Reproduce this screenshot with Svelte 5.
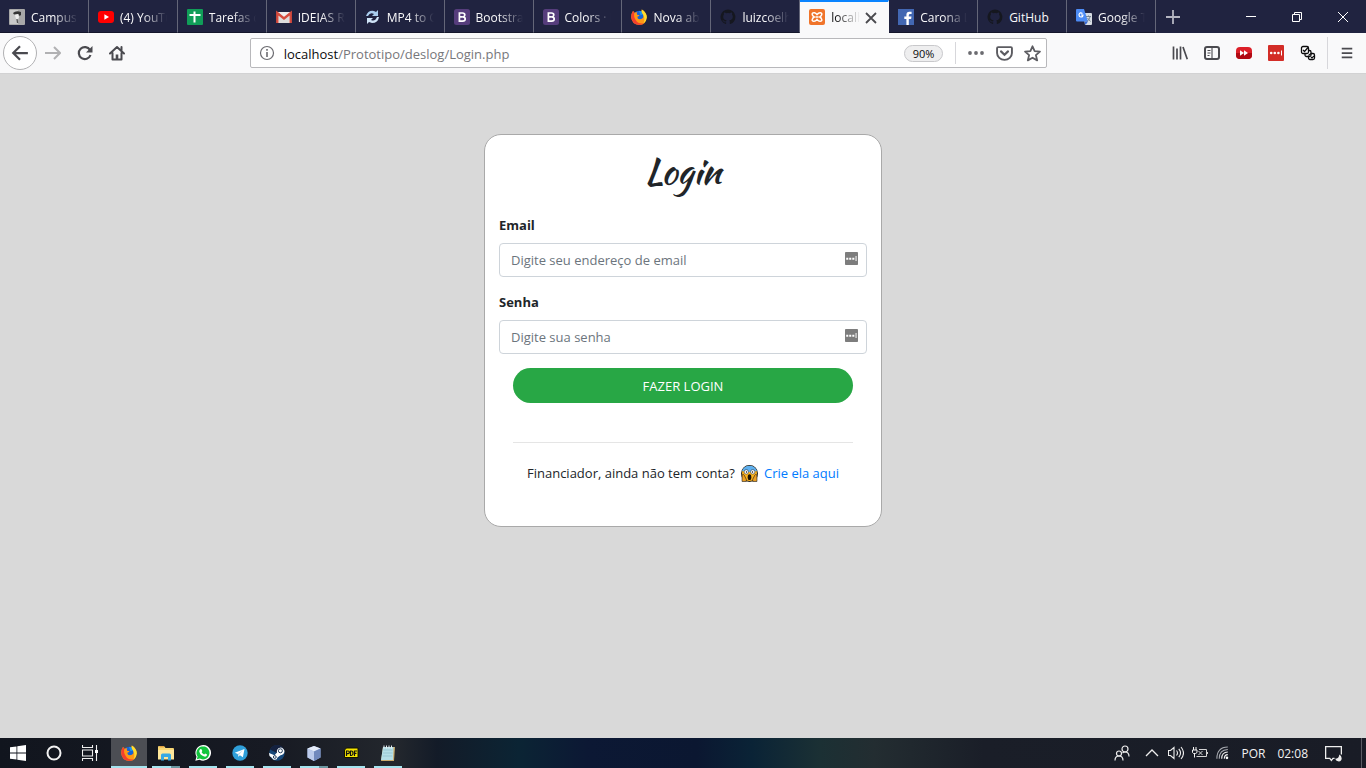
<script>
  const tabs = [
    { icon: 'campus', title: 'Campus' },
    { icon: 'youtube', title: '(4) YouTu' },
    { icon: 'sheets', title: 'Tarefas d' },
    { icon: 'gmail', title: 'IDEIAS RA' },
    { icon: 'convert', title: 'MP4 to G' },
    { icon: 'bootstrap', title: 'Bootstrap' },
    { icon: 'bootstrap', title: 'Colors · B' },
    { icon: 'firefox', title: 'Nova aba' },
    { icon: 'github', title: 'luizcoelh' },
    { icon: 'xampp', title: 'localh', active: true },
    { icon: 'facebook', title: 'Carona L' },
    { icon: 'github', title: 'GitHub', short: true },
    { icon: 'translate', title: 'Google T' }
  ];

  const apps = [
    { icon: 'firefox', label: 'Firefox', active: true },
    { icon: 'explorer', label: 'Explorador', multiple: true },
    { icon: 'whatsapp', label: 'WhatsApp' },
    { icon: 'telegram', label: 'Telegram' },
    { icon: 'steam', label: 'Steam' },
    { icon: 'cube', label: 'VirtualBox', multiple: true },
    { icon: 'pdf', label: 'PDF' },
    { icon: 'notepad', label: 'Bloco de notas' }
  ];

  let email = $state('');
  let password = $state('');
</script>

{#snippet glyph(name, size)}
  <svg width={size} height={size} viewBox="0 0 16 16" fill="none" aria-hidden="true">
    {#if name === 'campus'}
      <rect width="16" height="16" rx="1" fill="#a8a8a8" />
      <path d="M1 1h8v14H1z" fill="#c9c9c9" />
      <path d="M4 4q3-3 8-1v3l-1.500 1-1-2-4.500.5z" fill="#333" />
      <path d="M6 6l3-1 1 3-1 3-2-1z" fill="#eee" />
      <path d="M8 10l.6 4" stroke="#555" stroke-width="1.300" />
    {:else if name === 'youtube'}
      <rect y="2" width="16" height="12" rx="3" fill="#f00" />
      <path d="M6.400 5.300v5.400L11 8z" fill="#fff" />
    {:else if name === 'sheets'}
      <rect width="16" height="16" rx="1" fill="#109d58" />
      <path d="M7.500 2.500v11M2.500 6h11" stroke="#fff" stroke-width="2" />
    {:else if name === 'gmail'}
      <rect x="1" y="3" width="14" height="11" rx="1" fill="#eee" />
      <path d="M3 14V6l5 4.300L13 6v8z" fill="#ddd" />
      <path d="M1.300 14V4L8 9.500 14.700 4v10" stroke="#d54b3d" stroke-width="2.400" />
    {:else if name === 'convert'}
      <path d="M1 7Q3 1 9 2l2 1 2-2v6H7l2-2Q5 3 3 7z" fill="#a9cdee" />
      <path d="M14 8q-1 6-7 6l-3-1-2 2V9h6l-2 2q4 2 6-3z" fill="#cfe4f7" />
    {:else if name === 'bootstrap'}
      <rect width="16" height="16" rx="2.500" fill="#563d7c" />
      <path d="M5.400 4h3q2.400 0 2.400 2 0 1.600-1.700 1.900 2.100.3 2.100 2.100 0 2.200-2.700 2.200H5.400zM5.400 7.900h3.500" stroke="#fff" stroke-width="1.700" />
    {:else if name === 'firefox'}
      <circle cx="8.300" cy="8.300" r="6.600" fill="#1464d8" />
      <path d="M8 2l2.800.2 2 3-3.200 1z" fill="#1d95f0" />
      <path d="M2 2q1 .6 1.400 1.700Q5 3 6.400 3.500 5 4.800 6.500 6.100h2Q8.400 7.300 6.400 7.800q0 2.500 2.500 2.500 2.300 0 3.500-2.100Q13 5.500 11 3.800 10.300 2.600 10.800.5q4.800 3 5 7.700Q15.300 15.500 8.200 16 .9 15.400.2 8.200.1 4.700 2 2z" fill="#ff9815" />
      <path d="M2 2Q.1 4.700.2 8.200.9 15.400 8.200 16q3 0 5-1.700-6 1.200-8.300-3Q2.300 7.700 3.400 3.700z" fill="#f4402e" />
      <path d="M10.800.5q4.800 3 5 7.700-.3 4-3.300 6.200Q15 9.300 11 3.800 10.300 2.600 10.800.5z" fill="#ffdd2e" />
    {:else if name === 'github'}
      <path d="M8 .5a7.500 7.500 0 0 0-2.400 14.600c.4.100.5-.2.500-.4v-1.400c-2.100.5-2.600-.9-2.600-.9-.3-.8-.8-1-.8-1-.7-.5 0-.5 0-.5.800.1 1.200.8 1.200.8.700 1.200 1.800.8 2.200.6.100-.5.300-.8.500-1-1.700-.2-3.400-.8-3.400-3.700 0-.8.300-1.500.8-2-.1-.2-.4-1 .1-2 0 0 .6-.2 2 .7a7 7 0 0 1 3.800 0c1.400-.9 2-.7 2-.7.500 1 .2 1.800.1 2 .5.500.8 1.200.8 2 0 2.900-1.800 3.500-3.500 3.700.3.200.5.700.5 1.400v2c0 .2.100.5.500.4A7.500 7.500 0 0 0 8 .5z" fill="#15171f" />
    {:else if name === 'xampp'}
      <rect width="16" height="16" rx="2" fill="#f0742a" />
      <path d="M5.500 3.700H5q-2.500 0-1.600 2.400.4 1.200 1.800 1.900-1.400.7-1.800 1.900-.9 2.400 1.600 2.400 1.600 0 3-1.800 1.400 1.800 3 1.800 2.500 0 1.600-2.400-.4-1.200-1.800-1.900 1.400-.7 1.800-1.900.9-2.400-1.600-2.400-1.600 0-3 1.800-1.200-1.600-2.500-1.800z" stroke="#fff" stroke-width="1.500" />
      <path d="M6.500 8h3" stroke="#fff" stroke-width="1.500" />
    {:else if name === 'facebook'}
      <rect width="16" height="16" fill="#4267b2" />
      <path d="M8.400 16V10H6.300V7.500h2.100V5.700Q8.400 2.700 11.300 2.700h2.300v2.400h-1.500q-1.300 0-1.300 1.200v1.200h2.700l-.4 2.500h-2.300v6z" fill="#fff" />
    {:else if name === 'translate'}
      <path d="M7 4h8q1 0 1 1v10q0 1-1 1H9z" fill="#d8dde3" />
      <path d="M1 0h7l4 12.500H1q-1 0-1-1V1q0-1 1-1z" fill="#4c8bf5" />
      <path d="M8.500 12.500H12L9.500 16z" fill="#3367d6" />
      <path d="M6.500 4.500Q4 2.800 3 5.500 3 8 5 8q2 0 2-2H5" stroke="#fff" stroke-width="1.100" />
      <path d="M10 7.500h5M12.500 6.500v1M14 8q-1 3-3 4.500M11.500 9l3 3.500" stroke="#6b7c8c" stroke-width=".9" />
    {:else if name === 'back'}
      <path d="M15 8H2M8 2L2 8l6 6" stroke="#4a4a4f" stroke-width="2" />
    {:else if name === 'forward'}
      <path d="M0 8h14M9 2l6 6-6 6" stroke="#b1b1b3" stroke-width="2" />
    {:else if name === 'reload'}
      <path d="M13 5A6 6 0 1 0 13.500 10" stroke="#4a4a4f" stroke-width="2.200" />
      <path d="M15.500 1v6.500H9z" fill="#4a4a4f" />
    {:else if name === 'home'}
      <path d="M1 8.500L8 2l7 6.500M3.500 8v6.500h9V8M12.500 2v4" stroke="#4a4a4f" stroke-width="2" stroke-linejoin="round" stroke-linecap="round" />
      <path d="M6.700 9.500h2.600V14H6.700z" fill="#4a4a4f" />
    {:else if name === 'info'}
      <circle cx="8" cy="8" r="6.500" stroke="#6b6b70" stroke-width="1.200" />
      <path d="M8 7v5M8 4v1.700" stroke="#6b6b70" stroke-width="1.600" />
    {:else if name === 'dots'}
      <circle cx="2" cy="8" r="1.900" fill="#6b6b70" />
      <circle cx="8" cy="8" r="1.900" fill="#6b6b70" />
      <circle cx="14" cy="8" r="1.900" fill="#6b6b70" />
    {:else if name === 'pocket'}
      <path d="M2 2h12q1 0 1 1v4.500A7 6.500 0 0 1 1 7.500V3q0-1 1-1z" stroke="#5c5c61" stroke-width="1.800" />
      <path d="M4.700 6L8 9.200 11.300 6" stroke="#5c5c61" stroke-width="2" stroke-linecap="round" />
    {:else if name === 'star'}
      <path d="M8 1.200l2 4.500 5 .5-3.800 3.300 1.200 5L8 12l-4.400 2.500 1.200-5L1 6.200l5-.5z" stroke="#5c5c61" stroke-width="1.700" stroke-linejoin="round" />
    {:else if name === 'library'}
      <path d="M1.500 1.500v13M5 3.500v11M8.500 1.500v13M11 2l4.300 12.300" stroke="#4a4a4f" stroke-width="1.700" />
    {:else if name === 'sidebar'}
      <rect x="1" y="2" width="14" height="12" rx="2" stroke="#4a4a4f" stroke-width="2" />
      <path d="M8 2v12M3.500 5.500h3M3.500 8h3M3.500 10.500h2" stroke="#4a4a4f" stroke-width="1.100" />
    {:else if name === 'player'}
      <rect y="2" width="16" height="12" rx="4" fill="#dc1f28" />
      <path d="M0 8h16v2q0 4-4 4H4q-4 0-4-4z" fill="#b00a13" />
      <path d="M4 5.300V10.700L8 8zM8 5.300V10.700L12 8z" fill="#fff" />
    {:else if name === 'lastpass'}
      <rect width="16" height="16" rx="1" fill="#d32d27" />
      <circle cx="3.200" cy="8" r="1.300" fill="#fff" />
      <circle cx="6.800" cy="8" r="1.300" fill="#fff" />
      <circle cx="10.400" cy="8" r="1.300" fill="#fff" />
      <path d="M13 5.500h1v5h-1z" fill="#fff" />
    {:else if name === 'checks'}
      <rect x="8.500" y="8.500" width="6" height="6" rx="1.500" fill="#fff" stroke="#0c0c0d" stroke-width="1.300" />
      <rect x="5" y="5.500" width="6" height="6" rx="1.500" fill="#fff" stroke="#0c0c0d" stroke-width="1.300" />
      <rect x="1.500" y="1.500" width="7" height="7" rx="1.500" fill="#fff" stroke="#0c0c0d" stroke-width="1.300" />
      <path d="M3 5l1.500 1.500L8 2.500M8.500 10.500l2.500-2M11 12l1 1 2-2" stroke="#0c0c0d" stroke-width="1.200" />
    {:else if name === 'menu'}
      <path d="M2 3h12M2 8h12M2 13h12" stroke="#4a4a4f" stroke-width="2" />
    {:else if name === 'plus'}
      <path d="M8 1v14M1 8h14" stroke="#b4b5c1" stroke-width="1.800" />
    {:else if name === 'close'}
      <path d="M3 3l10 10M13 3L3 13" stroke="#4a4a4f" stroke-width="1.800" />
    {:else if name === 'minimize'}
      <path d="M3 7.500h10" stroke="#fff" />
    {:else if name === 'restore'}
      <path d="M3.500 5.500h7v7h-7zM5.500 5V3.500h7v7H11" stroke="#fff" />
    {:else if name === 'window-close'}
      <path d="M3 3l10 10M13 3L3 13" stroke="#fff" />
    {:else if name === 'windows'}
      <path d="M0 2.300l6.500-.9v6.200H0zM7.300 1.200L16 0v7.600H7.300zM0 8.400h6.500v6.200L0 13.700zM7.300 8.400H16V16l-8.700-1.200z" fill="#fff" />
    {:else if name === 'cortana'}
      <circle cx="8" cy="8" r="6.500" stroke="#f2f2f2" stroke-width="2" />
    {:else if name === 'taskview'}
      <path d="M.5 0v2.500h10V0M.5 16v-2.500h10V16M.5 5h10v6H.500zM14.500 0v16" stroke="#eee" stroke-width="1.100" />
      <path d="M13 5h3v3h-3z" fill="#fff" />
    {:else if name === 'explorer'}
      <path d="M0 2q0-1 1-1h5l1.500 2H15q1 0 1 1v10H0z" fill="#f8d775" />
      <path d="M0 5h16v9.500H0z" fill="#ffe79b" />
      <path d="M3 15.500V10q0-1.500 1.500-1.500h7Q13 8.500 13 10v5.500h-3V12H6v3.500z" fill="#38a9e4" />
      <path d="M1.500 1.800H6" stroke="#d98b2b" />
    {:else if name === 'whatsapp'}
      <path d="M.3 15.800l1.200-4A7.800 7.800 0 1 1 4.500 14.700z" fill="#fff" />
      <path d="M1.800 14.300l.8-2.700a6.500 6.500 0 1 1 2.200 2z" fill="#12c43d" />
      <path d="M5.500 4l1 .2.800 1.900-.7 1.100q.8 1.500 2.600 2.200l.9-1 2 1q0 2-2 2.300Q5.500 11.200 4.200 6.600 4.300 4.800 5.500 4z" fill="#fff" />
    {:else if name === 'telegram'}
      <circle cx="8" cy="8" r="7.700" fill="#2f9fd9" />
      <path d="M2.800 7.800L12.500 4l-1.600 8.200-3-2-1.600 1.600-.5-2.800z" fill="#fff" />
      <path d="M5.800 9l5-3.700-3.400 4-.9 2z" fill="#b8daed" />
    {:else if name === 'steam'}
      <circle cx="8" cy="8" r="7.700" fill="#174879" />
      <path d="M1 4.500A7.700 7.700 0 0 1 15 4.500L8 8z" fill="#14213f" />
      <path d="M0 8l5.500 2.200L8 7.500a3.800 3.800 0 1 1 3.500 2.700l-3 2.200a2.800 2.800 0 0 1-5.400.5L.500 11z" fill="#fff" />
      <circle cx="11.400" cy="5.800" r="2" fill="#fff" stroke="#24405f" />
      <circle cx="5.800" cy="12" r="1.400" stroke="#24405f" />
    {:else if name === 'cube'}
      <path d="M8 1l6.500 2.500v9L8 16l-6.500-3.500v-9z" fill="#9db4de" />
      <path d="M8 1l6.500 2.500L8 6.500 1.500 3.500z" fill="#e6edfa" />
      <path d="M1.500 3.500l6.500 3V16l-6.500-3.500z" fill="#bccbec" />
      <path d="M8 6.500l6.500-3v9L8 16z" fill="#7189bd" />
    {:else if name === 'pdf'}
      <path d="M3.500 3H15v9.500H1.500V5z" fill="#f7e600" stroke="#141400" />
      <path d="M3.500 11V6h1.800q1 0 1 1.300T5.300 8.600H4M7.500 10.500V6h1q1.500 0 1.500 2.200t-1.500 2.300zM11.500 11V6H14M11.500 8.300h2" stroke="#111" stroke-width="1.200" />
    {:else if name === 'notepad'}
      <path d="M3 2h12l-1 14H1z" fill="#c9ab6c" />
      <path d="M3 2h10.500L13 15H1z" fill="#b5dfe7" />
      <path d="M3.500 5h9M3 8h9.500M2.700 11h9.500" stroke="#8dbdca" stroke-width=".7" />
      <path d="M4 .5v3M6.500.5v3M9 .5v3M11.500.5v3" stroke="#e8eef0" />
    {:else if name === 'people'}
      <circle cx="11" cy="4" r="3" stroke="#eee" stroke-width="1.200" />
      <circle cx="5" cy="8.500" r="2.500" stroke="#eee" stroke-width="1.200" />
      <path d="M1 15.500q0-4.500 4-4.500t4 4.500M8.500 8q1-1 2.500-1 4 0 4 4.500" stroke="#eee" stroke-width="1.200" />
    {:else if name === 'chevron'}
      <path d="M2 11l6-6 6 6" stroke="#eee" stroke-width="1.300" />
    {:else if name === 'speaker'}
      <path d="M.5 5.500h2L6 2.500v11l-3.500-3H.500zM8.500 5.500q2 2.500 0 5M10.800 3.800q3.500 4.200 0 8.400M13 2q5 6 0 12" stroke="#eee" stroke-width="1.100" />
    {:else if name === 'battery'}
      <path d="M7 4.500h7.500v7H4.500M15.500 7v2M6.500 6l4 4M10.500 6l-4 4" stroke="#d4d4d4" />
      <path d="M1.500 2v3M4 2v3M.5 5H5v2.500L3.500 8.500h-2L.500 7.500zM2.500 8v4.500" stroke="#f2f2f2" />
    {:else if name === 'wifi'}
      <circle cx="12.500" cy="13.500" r="1.500" fill="#fff" />
      <path d="M9.500 14.500q0-4.500 4-4.700M6.500 14.500q0-7.500 7-7.700" stroke="#eee" stroke-width="1.300" />
      <path d="M3.700 14.500q0-10.200 9.800-10.500M1 14.500Q1 1.500 13.500 1.200" stroke="#a9acb2" stroke-width="1.200" />
    {:else if name === 'action'}
      <path d="M9 12.500H7.500L6 14.500l-1.500-2H.600V1.500h14.800V9" stroke="#eee" stroke-width="1.200" />
      <path d="M13.500 9q-.3 4-4 4 1 2.500 3.500 2.500 2.700-.2 2.700-3Q15.500 10 13.500 9z" fill="#eee" />
    {:else if name === 'fill'}
      <rect width="16" height="16" rx="1" fill="#7d7d7d" />
      <path d="M1.500 7h2.500v2.500H1.500zM5.200 7h2.500v2.500H5.200zM9 7h2.500v2.500H9zM13 5h1.200v6H13z" fill="#fff" />
    {:else if name === 'scream'}
      <circle cx="8" cy="8" r="7.500" fill="#ffb51b" stroke="#222" />
      <path d="M1 5.500Q3 .8 8 .8t7 4.700q-3.500 1.500-7 1-4 .5-7-1z" fill="#5eb0ef" />
      <circle cx="5" cy="6.500" r="2.100" fill="#fff" stroke="#222" stroke-width=".5" />
      <circle cx="11" cy="6.500" r="2.100" fill="#fff" stroke="#222" stroke-width=".5" />
      <circle cx="5.200" cy="6.500" r=".7" fill="#111" />
      <circle cx="10.800" cy="6.500" r=".7" fill="#111" />
      <ellipse cx="8" cy="11.500" rx="1.700" ry="2.700" fill="#1c1308" />
      <path d="M1 15.500V9.500q1.300-1.500 2 0l2 4v2zM15 15.500V9.500q-1.300-1.500-2 0l-2 4v2z" fill="#f0a020" stroke="#222" stroke-width=".6" />
    {/if}
  </svg>
{/snippet}

<div class="desktop">
  <header class="tabstrip">
    <div class="tabs">
      {#each tabs as tab}
        <div class="tab" class:active={tab.active} class:short={tab.short}>
          <button class="tab-main">
            {@render glyph(tab.icon, 16)}
            <span>{tab.title}</span>
          </button>
          {#if tab.active}
            <button class="tab-close" aria-label="Fechar aba">{@render glyph('close', 16)}</button>
          {/if}
        </div>
      {/each}
    </div>
    <button class="new-tab" aria-label="Nova aba">{@render glyph('plus', 16)}</button>
    <div class="window-controls">
      <button aria-label="Minimizar">{@render glyph('minimize', 16)}</button>
      <button aria-label="Restaurar">{@render glyph('restore', 16)}</button>
      <button aria-label="Fechar">{@render glyph('window-close', 16)}</button>
    </div>
  </header>

  <nav class="toolbar">
    <button class="back" aria-label="Voltar">{@render glyph('back', 18)}</button>
    <button class="tool" aria-label="Avançar">{@render glyph('forward', 16)}</button>
    <button class="tool" aria-label="Recarregar">{@render glyph('reload', 16)}</button>
    <button class="tool" aria-label="Início">{@render glyph('home', 16)}</button>
    <div class="spacer"></div>
    <div class="urlbar">
      {@render glyph('info', 16)}
      <div class="address">localhost<span>/Prototipo/deslog/Login.php</span></div>
      <button class="zoom">90%</button>
      <div class="actions">
        <button aria-label="Ações da página">{@render glyph('dots', 16)}</button>
        <button aria-label="Pocket">{@render glyph('pocket', 17)}</button>
        <button aria-label="Favoritar">{@render glyph('star', 17)}</button>
      </div>
    </div>
    <div class="spacer"></div>
    <button class="tool" aria-label="Biblioteca">{@render glyph('library', 16)}</button>
    <button class="tool" aria-label="Painel lateral">{@render glyph('sidebar', 16)}</button>
    <button class="tool" aria-label="Player">{@render glyph('player', 16)}</button>
    <button class="tool" aria-label="Senhas">{@render glyph('lastpass', 16)}</button>
    <button class="tool" aria-label="Seleção">{@render glyph('checks', 16)}</button>
    <div class="menu"><button class="tool" aria-label="Menu">{@render glyph('menu', 14)}</button></div>
  </nav>

  <main>
    <form class="card" onsubmit={(e) => e.preventDefault()}>
      <h1>Login</h1>
      <label for="email">Email</label>
      <div class="field">
        <input id="email" type="email" placeholder="Digite seu endereço de email" bind:value={email} />
        {@render glyph('fill', 13)}
      </div>
      <label for="password">Senha</label>
      <div class="field">
        <input id="password" type="password" placeholder="Digite sua senha" bind:value={password} />
        {@render glyph('fill', 13)}
      </div>
      <button class="submit" type="submit">FAZER LOGIN</button>
      <hr />
      <p>
        <span>Financiador, ainda não tem conta?</span>
        {@render glyph('scream', 17)}
        <a href="#criar">Crie ela aqui</a>
      </p>
    </form>
  </main>

  <footer class="taskbar">
    <button class="system" aria-label="Iniciar">{@render glyph('windows', 16)}</button>
    <button class="system" aria-label="Cortana">{@render glyph('cortana', 16)}</button>
    <button class="system" aria-label="Visão de tarefas">{@render glyph('taskview', 16)}</button>
    <div class="apps">
      {#each apps as app}
        <button class="app" class:active={app.active} class:multiple={app.multiple} aria-label={app.label}>
          {@render glyph(app.icon, 16)}
        </button>
      {/each}
    </div>
    <div class="tray">
      <button class="people" aria-label="Pessoas">{@render glyph('people', 16)}</button>
      {@render glyph('chevron', 16)}
      {@render glyph('speaker', 16)}
      {@render glyph('battery', 16)}
      {@render glyph('wifi', 14)}
      <span class="lang">POR</span>
      <time>02:08</time>
      <button class="action" aria-label="Notificações">{@render glyph('action', 17)}</button>
    </div>
  </footer>
</div>

<style>
  :global(body) {
    margin: 0;
  }

  .desktop {
    display: flex;
    flex-direction: column;
    min-height: 100vh;
    background: #d9d9d9;
    font-family: 'Segoe UI', 'Open Sans', 'Noto Sans', sans-serif;
    font-size: 13px;
    color: #212529;
  }

  .desktop :global(*) {
    box-sizing: border-box;
  }

  svg {
    display: block;
    flex: none;
  }

  button {
    display: flex;
    align-items: center;
    justify-content: center;
    margin: 0;
    padding: 0;
    border: 0;
    background: none;
    color: inherit;
    font: inherit;
  }

  .tabstrip {
    display: flex;
    height: 33px;
    background: #202340;
    color: #f9f9fa;
    font-size: 12px;
  }

  .tabs {
    display: grid;
    flex: 1;
    grid-template-columns: repeat(13, minmax(0, 1fr));
  }

  .tab {
    display: flex;
    padding: 0 8px 0 9px;
    border-right: 1px solid #646678;
    border-bottom: 1px solid #14162b;
  }

  .tab.active {
    padding-right: 8px;
    border-top: 2px solid #0a84ff;
    border-right-color: #f9f9fa;
    border-bottom: 0;
    background: #f9f9fa;
    color: #0c0c0d;
  }

  .tab-main {
    flex: 1;
    gap: 6px;
    min-width: 0;
    padding-top: 2px;
  }

  .tab.active .tab-main {
    padding: 0 0 1px;
  }

  .tab-main span {
    flex: 1;
    overflow: hidden;
    text-align: left;
    white-space: nowrap;
    mask-image: linear-gradient(to left, transparent 2px, #000 26px);
  }

  .tab.short .tab-main span {
    mask-image: none;
  }

  .tab-close {
    width: 18px;
  }

  .new-tab {
    width: 34px;
    margin-right: 38px;
  }

  .window-controls {
    display: flex;
  }

  .window-controls button {
    width: 46px;
  }

  .toolbar {
    display: flex;
    align-items: center;
    height: 41px;
    padding: 0 3px;
    border-bottom: 1px solid #d2d2d3;
    background: #f9f9fa;
  }

  .back {
    width: 34px;
    height: 34px;
    border: 1px solid #b1b1b3;
    border-radius: 50%;
    background: #fff;
  }

  .tool {
    width: 32px;
    height: 32px;
  }

  .menu {
    margin-left: 3px;
    padding-left: 3px;
    border-left: 1px solid #d7d7db;
  }

  .spacer {
    flex: 8;
  }

  .urlbar {
    display: flex;
    flex: 54;
    align-items: center;
    height: 30px;
    padding-left: 8px;
    border: 1px solid #b8b8bb;
    border-radius: 2px;
    background: #fff;
  }

  .address {
    flex: 1;
    margin-left: 9px;
    padding-top: 2px;
    color: #0c0c0d;
    white-space: nowrap;
  }

  .address span {
    color: #77777b;
  }

  .zoom {
    height: 17px;
    margin-right: 12px;
    padding: 0 8px;
    border: 1px solid #c8c8cb;
    border-radius: 9px;
    background: #eeeeef;
    color: #0c0c0d;
    font-size: 11px;
  }

  .actions {
    display: flex;
    padding-left: 6px;
    border-left: 1px solid #d7d7db;
  }

  .actions button {
    width: 28px;
    height: 22px;
  }

  main {
    display: flex;
    flex: 1;
    align-items: flex-start;
    justify-content: center;
    padding: 60px 16px;
  }

  .card {
    width: 100%;
    max-width: 398px;
    padding: 14px 14px 42px;
    border: 1px solid #a9a9a9;
    border-radius: 17px;
    background: #fff;
    line-height: 22px;
  }

  h1 {
    margin: 0 0 20px;
    font-family: 'Kaushan Script', cursive;
    font-size: 36px;
    font-weight: 400;
    line-height: 45px;
    text-align: center;
  }

  label {
    display: block;
    margin-bottom: 7px;
    font-weight: 700;
  }

  .field {
    display: flex;
    align-items: center;
    height: 34px;
    margin-bottom: 14px;
    padding: 0 8px 4px 11px;
    border: 1px solid #ced4da;
    border-radius: 4px;
  }

  input {
    flex: 1;
    min-width: 0;
    margin: 4px 0 0;
    padding: 0;
    border: 0;
    outline: 0;
    background: none;
    color: #495057;
    font: inherit;
  }

  input::placeholder {
    color: #6c757d;
    opacity: 1;
  }

  .submit {
    width: calc(100% - 28px);
    height: 35px;
    margin: 0 14px;
    border-radius: 18px;
    background: #28a745;
    color: #fff;
  }

  hr {
    margin: 39px 14px 19px;
    border: 0;
    border-top: 1px solid #e5e5e5;
  }

  p {
    display: flex;
    align-items: center;
    justify-content: center;
    gap: 6px;
    margin: 0;
  }

  a {
    color: #007bff;
    text-decoration: none;
  }

  .taskbar {
    display: flex;
    height: 30px;
    background: linear-gradient(
      to right,
      #11151e 0%,
      #171a23 20%,
      #23272d 29%,
      #131b28 32%,
      #0b2434 38%,
      #0c1834 43%,
      #0b1731 51%,
      #0a2336 55%,
      #1b3034 60%,
      #232d31 64%,
      #1a1e28 72%,
      #191c26 100%
    );
    color: #f2f2f2;
    font-size: 12px;
  }

  .system {
    width: 36px;
  }

  .apps {
    display: flex;
    gap: 1px;
    margin-left: 3px;
  }

  .app {
    width: 36px;
    background: linear-gradient(#a4e4ef, #a4e4ef) center bottom / 28px 2px no-repeat;
  }

  .app.multiple {
    background-image: linear-gradient(to right, #a4e4ef 19px, #6b97a1 19px);
  }

  .app.active {
    background-color: #4c4e54;
    background-size: 36px 2px;
  }

  .tray {
    display: flex;
    align-items: center;
    gap: 8px;
    margin-left: auto;
    padding-right: 4px;
  }

  .people {
    margin-right: 6px;
  }

  .tray .lang {
    margin-left: 3px;
  }

  time {
    margin-left: 4px;
  }

  .action {
    align-self: stretch;
    margin-left: 9px;
    padding-right: 19px;
    border-right: 1px solid #5a5c64;
  }
</style>
